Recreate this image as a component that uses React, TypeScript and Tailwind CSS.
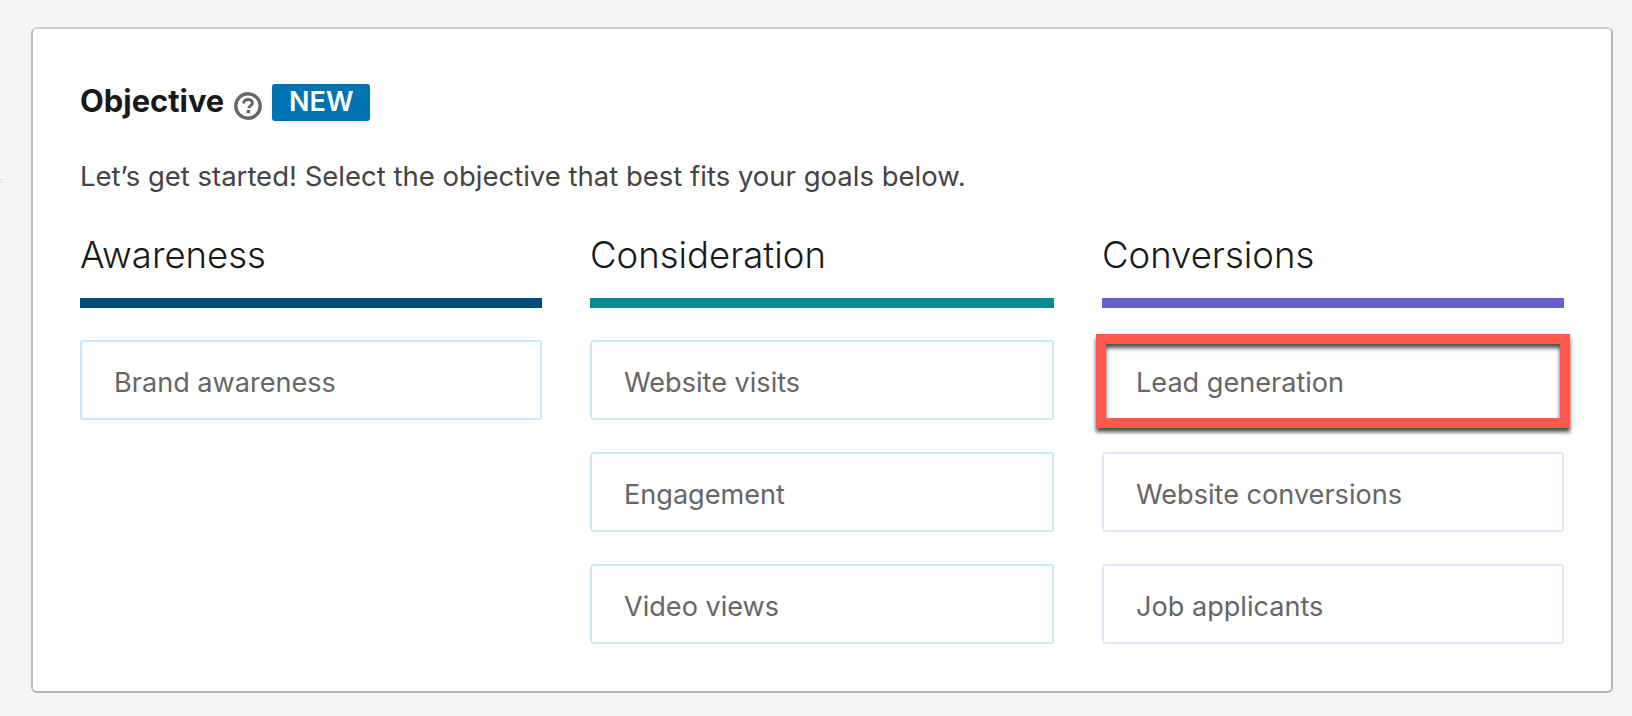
const F = "font-['Inter','Liberation_Sans',sans-serif]";

function Option({ label, border, highlighted }: { label: string; border: string; highlighted?: boolean }) {
  return (
    <div className={`relative flex h-[80px] items-center rounded-[3px] border-2 bg-white pl-[32px] pt-[7px] text-[27.1px] text-[#666666] ${border}`}>
      <span>{label}</span>
      {highlighted && (
        <div className="absolute -left-[8px] -right-[8px] -top-[8px] -bottom-[10px] border-[10px] border-[#ff5a4d] shadow-[0_4px_4px_rgba(0,0,0,0.7),inset_0_4px_4px_rgba(0,0,0,0.7)]" />
      )}
    </div>
  );
}

function Column({ title, bar, border, items, hl }: { title: string; bar: string; border: string; items: string[]; hl?: string }) {
  return (
    <div className="flex flex-col">
      <h2 className="h-[44px] text-[36.5px] font-light leading-[44px] text-[#191919]">{title}</h2>
      <div className={`mt-[21px] h-[10px] ${bar}`} />
      <div className="mt-[32px] flex flex-col gap-[32px]">
        {items.map((i) => (
          <Option key={i} label={i} border={border} highlighted={i === hl} />
        ))}
      </div>
    </div>
  );
}

export default function App() {
  return (
    <div className={`relative h-[716px] w-[1632px] overflow-hidden bg-[#f4f4f4] pl-[31px] pt-[27px] ${F}`}>
      <svg className="absolute left-0 top-[174px]" width="5" height="12" viewBox="0 0 5 12">
        <path d="M0 0 L4 4 L0 4 Z" fill="#ffffff" />
        <path d="M0 5 H3 M0 8 H2" stroke="#d8d8d8" strokeWidth="1" />
      </svg>
      <div className="h-[666px] w-[1582px] rounded-[6px] border-2 border-t-[#cfcfcf] border-l-[#bdbdbd] border-r-[#b5b5b5] border-b-[#b0b0b0] bg-white px-[47px] pt-[53px]">
        <div className="flex h-[40px] items-center">
          <h1 className="-mt-[3px] text-[30.9px] font-bold leading-[40px] text-[#191919]">Objective</h1>
          <svg className="ml-[10px] mt-[8px] shrink-0" width="28" height="28" viewBox="0 0 28 28" fill="none">
            <circle cx="14" cy="14" r="12.2" stroke="#666666" strokeWidth="3.4" />
            <path d="M9.6 11.5c0-2.4 2-3.9 4.4-3.9s4.4 1.3 4.4 3.5c0 3-3.6 2.8-3.6 5.2" stroke="#666666" strokeWidth="3" fill="none" />
            <rect x="12.7" y="18" width="3.4" height="3.2" fill="#666666" />
          </svg>
          <span className="ml-[10px] flex h-[37px] w-[98px] items-center justify-center rounded-[3px] bg-[#0073b1] text-[27px] font-semibold text-white">NEW</span>
        </div>
        <p className="mt-[36px] h-[36px] text-[27.5px] leading-[36px] text-[#444444]">Let’s get started! Select the objective that best fits your goals below.</p>
        <div className="mt-[39px] grid grid-cols-[462px_464px_462px] gap-x-[48px]">
          <Column title="Awareness" bar="bg-[#004b7c]" border="border-[#c8e9fb]" items={["Brand awareness"]} />
          <Column title="Consideration" bar="bg-[#0e8a93]" border="border-[#c5ecef]" items={["Website visits", "Engagement", "Video views"]} />
          <Column title="Conversions" bar="bg-[#675fcd]" border="border-[#e6e6fb]" items={["Lead generation", "Website conversions", "Job applicants"]} hl="Lead generation" />
        </div>
      </div>
    </div>
  );
}
